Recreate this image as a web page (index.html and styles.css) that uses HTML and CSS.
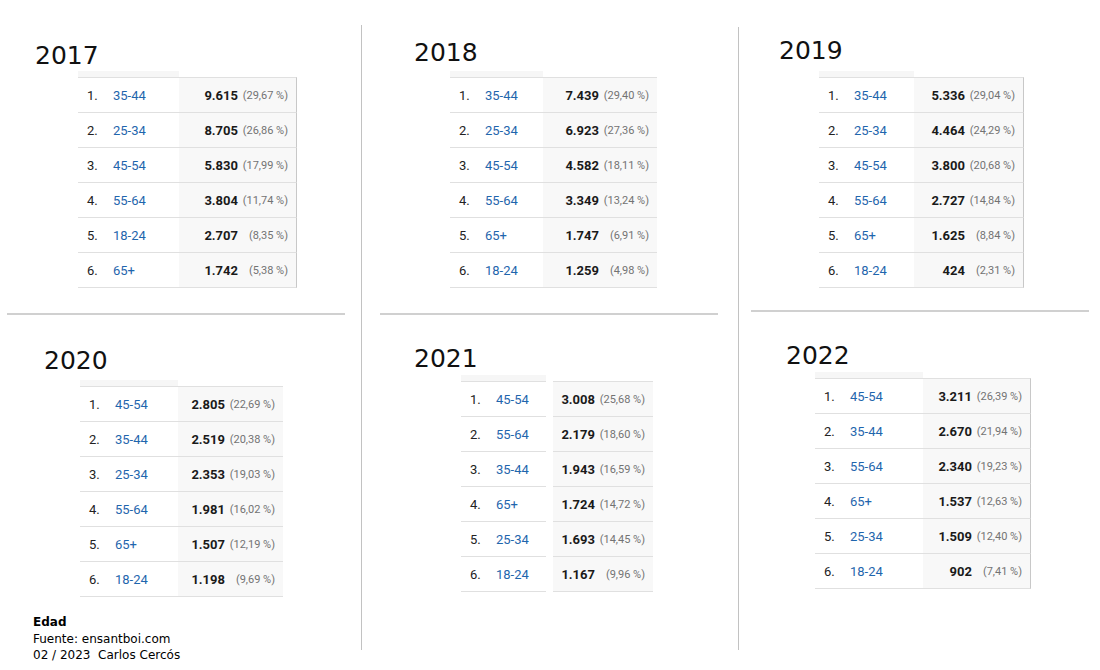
FILE: index.html
```html
<!DOCTYPE html>
<html lang="es">
<head>
<meta charset="utf-8">
<title>Edad</title>
<link rel="stylesheet" href="styles.css">
</head>
<body>
<div class="board">
  <section class="col col--a">
    <h2 class="title t2017">2017</h2>
    <div class="tbl tb2017 tbl--edge">
      <div class="strip"></div><div class="gap"></div>
      <div class="key"><span class="rank">1.</span><span class="lbl">35-44</span></div><div class="val"><b class="num">9.615</b><span class="pct">(29,67 %)</span></div>
      <div class="key"><span class="rank">2.</span><span class="lbl">25-34</span></div><div class="val"><b class="num">8.705</b><span class="pct">(26,86 %)</span></div>
      <div class="key"><span class="rank">3.</span><span class="lbl">45-54</span></div><div class="val"><b class="num">5.830</b><span class="pct">(17,99 %)</span></div>
      <div class="key"><span class="rank">4.</span><span class="lbl">55-64</span></div><div class="val"><b class="num">3.804</b><span class="pct">(11,74 %)</span></div>
      <div class="key"><span class="rank">5.</span><span class="lbl">18-24</span></div><div class="val"><b class="num">2.707</b><span class="pct">(8,35 %)</span></div>
      <div class="key"><span class="rank">6.</span><span class="lbl">65+</span></div><div class="val"><b class="num">1.742</b><span class="pct">(5,38 %)</span></div>
    </div>
    <div class="rule r1"></div>
    <h2 class="title t2020">2020</h2>
    <div class="tbl tb2020">
      <div class="strip"></div><div class="gap"></div>
      <div class="key"><span class="rank">1.</span><span class="lbl">45-54</span></div><div class="val"><b class="num">2.805</b><span class="pct">(22,69 %)</span></div>
      <div class="key"><span class="rank">2.</span><span class="lbl">35-44</span></div><div class="val"><b class="num">2.519</b><span class="pct">(20,38 %)</span></div>
      <div class="key"><span class="rank">3.</span><span class="lbl">25-34</span></div><div class="val"><b class="num">2.353</b><span class="pct">(19,03 %)</span></div>
      <div class="key"><span class="rank">4.</span><span class="lbl">55-64</span></div><div class="val"><b class="num">1.981</b><span class="pct">(16,02 %)</span></div>
      <div class="key"><span class="rank">5.</span><span class="lbl">65+</span></div><div class="val"><b class="num">1.507</b><span class="pct">(12,19 %)</span></div>
      <div class="key"><span class="rank">6.</span><span class="lbl">18-24</span></div><div class="val"><b class="num">1.198</b><span class="pct">(9,69 %)</span></div>
    </div>
    <div class="note">
      <strong>Edad</strong><br>
      Fuente: ensantboi.com<br>
      02 / 2023&nbsp; Carlos Cercós
    </div>
  </section>

  <section class="col col--b">
    <h2 class="title t2018">2018</h2>
    <div class="tbl tb2018">
      <div class="strip"></div><div class="gap"></div>
      <div class="key"><span class="rank">1.</span><span class="lbl">35-44</span></div><div class="val"><b class="num">7.439</b><span class="pct">(29,40 %)</span></div>
      <div class="key"><span class="rank">2.</span><span class="lbl">25-34</span></div><div class="val"><b class="num">6.923</b><span class="pct">(27,36 %)</span></div>
      <div class="key"><span class="rank">3.</span><span class="lbl">45-54</span></div><div class="val"><b class="num">4.582</b><span class="pct">(18,11 %)</span></div>
      <div class="key"><span class="rank">4.</span><span class="lbl">55-64</span></div><div class="val"><b class="num">3.349</b><span class="pct">(13,24 %)</span></div>
      <div class="key"><span class="rank">5.</span><span class="lbl">65+</span></div><div class="val"><b class="num">1.747</b><span class="pct">(6,91 %)</span></div>
      <div class="key"><span class="rank">6.</span><span class="lbl">18-24</span></div><div class="val"><b class="num">1.259</b><span class="pct">(4,98 %)</span></div>
    </div>
    <div class="rule r2"></div>
    <h2 class="title t2021">2021</h2>
    <div class="tbl tb2021">
      <div class="strip"></div><div class="gap"></div>
      <div class="key"><span class="rank">1.</span><span class="lbl">45-54</span></div><div class="val"><b class="num">3.008</b><span class="pct">(25,68 %)</span></div>
      <div class="key"><span class="rank">2.</span><span class="lbl">55-64</span></div><div class="val"><b class="num">2.179</b><span class="pct">(18,60 %)</span></div>
      <div class="key"><span class="rank">3.</span><span class="lbl">35-44</span></div><div class="val"><b class="num">1.943</b><span class="pct">(16,59 %)</span></div>
      <div class="key"><span class="rank">4.</span><span class="lbl">65+</span></div><div class="val"><b class="num">1.724</b><span class="pct">(14,72 %)</span></div>
      <div class="key"><span class="rank">5.</span><span class="lbl">25-34</span></div><div class="val"><b class="num">1.693</b><span class="pct">(14,45 %)</span></div>
      <div class="key"><span class="rank">6.</span><span class="lbl">18-24</span></div><div class="val"><b class="num">1.167</b><span class="pct">(9,96 %)</span></div>
    </div>
  </section>

  <section class="col col--c">
    <h2 class="title t2019">2019</h2>
    <div class="tbl tb2019 tbl--edge">
      <div class="strip"></div><div class="gap"></div>
      <div class="key"><span class="rank">1.</span><span class="lbl">35-44</span></div><div class="val"><b class="num">5.336</b><span class="pct">(29,04 %)</span></div>
      <div class="key"><span class="rank">2.</span><span class="lbl">25-34</span></div><div class="val"><b class="num">4.464</b><span class="pct">(24,29 %)</span></div>
      <div class="key"><span class="rank">3.</span><span class="lbl">45-54</span></div><div class="val"><b class="num">3.800</b><span class="pct">(20,68 %)</span></div>
      <div class="key"><span class="rank">4.</span><span class="lbl">55-64</span></div><div class="val"><b class="num">2.727</b><span class="pct">(14,84 %)</span></div>
      <div class="key"><span class="rank">5.</span><span class="lbl">65+</span></div><div class="val"><b class="num">1.625</b><span class="pct">(8,84 %)</span></div>
      <div class="key"><span class="rank">6.</span><span class="lbl">18-24</span></div><div class="val"><b class="num">424</b><span class="pct">(2,31 %)</span></div>
    </div>
    <div class="rule r3"></div>
    <h2 class="title t2022">2022</h2>
    <div class="tbl tb2022 tbl--edge">
      <div class="strip"></div><div class="gap"></div>
      <div class="key"><span class="rank">1.</span><span class="lbl">45-54</span></div><div class="val"><b class="num">3.211</b><span class="pct">(26,39 %)</span></div>
      <div class="key"><span class="rank">2.</span><span class="lbl">35-44</span></div><div class="val"><b class="num">2.670</b><span class="pct">(21,94 %)</span></div>
      <div class="key"><span class="rank">3.</span><span class="lbl">55-64</span></div><div class="val"><b class="num">2.340</b><span class="pct">(19,23 %)</span></div>
      <div class="key"><span class="rank">4.</span><span class="lbl">65+</span></div><div class="val"><b class="num">1.537</b><span class="pct">(12,63 %)</span></div>
      <div class="key"><span class="rank">5.</span><span class="lbl">25-34</span></div><div class="val"><b class="num">1.509</b><span class="pct">(12,40 %)</span></div>
      <div class="key"><span class="rank">6.</span><span class="lbl">18-24</span></div><div class="val"><b class="num">902</b><span class="pct">(7,41 %)</span></div>
    </div>
  </section>
</div>
</body>
</html>
```

FILE: styles.css
```css
* { box-sizing: border-box; }

html, body { background: #ffffff; }

body {
  margin: 0;
  min-height: 670px;
  color: #000;
  font-family: "DejaVu Sans", Verdana, sans-serif;
}

.board {
  display: flex;
  width: 1100px;
  height: 650px;
  padding-top: 25px;
}

.col {
  display: flex;
  flex-direction: column;
  align-items: flex-start;
}
.col > * { flex-shrink: 0; }
.col--a { width: 361px; }
.col--b { width: 377px; border-left: 1px solid #c2c2c2; }
.col--c { flex: 1; border-left: 1px solid #c2c2c2; margin-top: 2px; }

.title {
  margin: 0;
  font-family: "DejaVu Sans", Verdana, sans-serif;
  font-weight: normal;
  font-size: 25px;
  line-height: 30px;
  color: #111;
}
.t2017 { margin: 16px 0 0 35px; }
.t2020 { margin: 31px 0 0 44px; }
.t2018 { margin: 13px 0 0 52px; }
.t2021 { margin: 29px 0 0 52px; }
.t2019 { margin: 9px 0 0 40px; }
.t2022 { margin: 29px 0 0 47px; }

.rule {
  width: 338px;
  height: 2px;
  background: #d0d0d0;
}
.r1 { margin: 25px 0 0 7px; }
.r2 { margin: 25px 0 0 18px; }
.r3 { margin: 22px 0 0 12px; }

/* analytics-like table */
.tbl {
  display: grid;
  grid-template-columns: var(--kw) var(--vw);
  grid-template-rows: 6px repeat(5, 35px) 36px;
  column-gap: var(--gap, 0px);
  font-family: Roboto, "Liberation Sans", Arial, sans-serif;
}
.tb2017 { --kw: 101px; --vw: 118px; margin: 0 0 0 78px; }
.tb2020 { --kw: 98px;  --vw: 105px; margin: 4px 0 0 80px; }
.tb2018 { --kw: 93px;  --vw: 114px; margin: 3px 0 0 88px; }
.tb2021 { --kw: 85px;  --vw: 100px; --gap: 7px; margin: 1px 0 0 99px; }
.tb2019 { --kw: 95px;  --vw: 110px; margin: 5px 0 0 80px; }
.tb2022 { --kw: 108px; --vw: 108px; margin: 1px 0 0 76px; }

.strip { background: #f6f6f6; }

.key, .val {
  display: flex;
  align-items: center;
  border-top: 1px solid #e0e0e0;
}
.key:nth-last-child(2), .val:last-child { border-bottom: 1px solid #e0e0e0; }

.key {
  padding-left: 9px;
  font-size: 13px;
}
.rank { width: 26px; color: #222; }
.lbl { color: #1f66ad; }

.val {
  justify-content: flex-end;
  padding-right: 8px;
  background: #f8f8f8;
}
.tbl--edge .val { border-right: 1px solid #c8c8c8; }

.num {
  font-size: 13px;
  font-weight: 700;
  color: #1a1a1a;
}
.pct {
  width: 48px;
  margin-left: 2px;
  text-align: right;
  font-size: 11px;
  color: #737373;
}

.note {
  margin: 17px 0 0 33px;
  font-family: "DejaVu Sans", Verdana, sans-serif;
  font-size: 12px;
  line-height: 16.5px;
  color: #000;
}
```
